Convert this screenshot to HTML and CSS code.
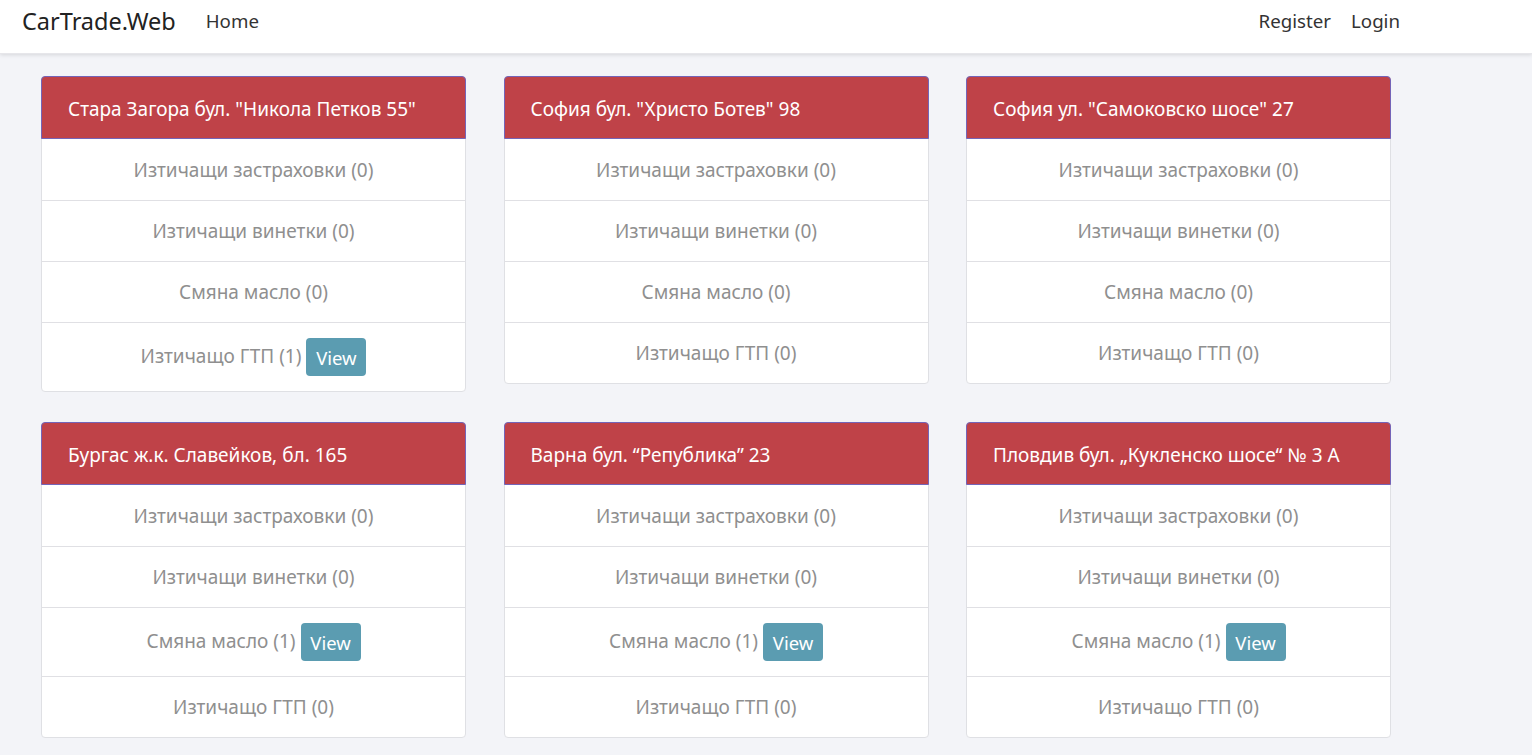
FILE: index.html
```html
<!DOCTYPE html>
<html lang="bg">
<head>
<meta charset="utf-8">
<title>CarTrade.Web</title>
<link rel="stylesheet" href="styles.css">
</head>
<body>
<nav class="navbar">
  <a class="brand" href="#">CarTrade.Web</a>
  <a class="nav-link" href="#">Home</a>
  <div class="nav-right">
    <a class="nav-link" href="#">Register</a>
    <a class="nav-link" href="#">Login</a>
  </div>
</nav>
<main class="grid">
  <section class="card">
    <header class="card-head">Стара Загора бул. "Никола Петков 55"</header>
    <div class="row">Изтичащи застраховки (0)</div>
    <div class="row">Изтичащи винетки (0)</div>
    <div class="row">Смяна масло (0)</div>
    <div class="row row-btn">Изтичащо ГТП (1) <a class="btn" href="#">View</a></div>
  </section>
  <section class="card">
    <header class="card-head">София бул. "Христо Ботев" 98</header>
    <div class="row">Изтичащи застраховки (0)</div>
    <div class="row">Изтичащи винетки (0)</div>
    <div class="row">Смяна масло (0)</div>
    <div class="row">Изтичащо ГТП (0)</div>
  </section>
  <section class="card">
    <header class="card-head">София ул. "Самоковско шосе" 27</header>
    <div class="row">Изтичащи застраховки (0)</div>
    <div class="row">Изтичащи винетки (0)</div>
    <div class="row">Смяна масло (0)</div>
    <div class="row">Изтичащо ГТП (0)</div>
  </section>
  <section class="card">
    <header class="card-head">Бургас ж.к. Славейков, бл. 165</header>
    <div class="row">Изтичащи застраховки (0)</div>
    <div class="row">Изтичащи винетки (0)</div>
    <div class="row row-btn">Смяна масло (1) <a class="btn" href="#">View</a></div>
    <div class="row">Изтичащо ГТП (0)</div>
  </section>
  <section class="card">
    <header class="card-head">Варна бул. “Република” 23</header>
    <div class="row">Изтичащи застраховки (0)</div>
    <div class="row">Изтичащи винетки (0)</div>
    <div class="row row-btn">Смяна масло (1) <a class="btn" href="#">View</a></div>
    <div class="row">Изтичащо ГТП (0)</div>
  </section>
  <section class="card">
    <header class="card-head">Пловдив бул. „Кукленско шосе“ № 3 А</header>
    <div class="row">Изтичащи застраховки (0)</div>
    <div class="row">Изтичащи винетки (0)</div>
    <div class="row row-btn">Смяна масло (1) <a class="btn" href="#">View</a></div>
    <div class="row">Изтичащо ГТП (0)</div>
  </section>
</main>
</body>
</html>
```

FILE: styles.css
```css
* { box-sizing: border-box; }
html, body { margin: 0; padding: 0; }
body {
  background: #f3f4f8;
  font-family: "Noto Sans", "Open Sans", sans-serif;
  color: #212529;
  height: 755px;
  overflow: hidden;
}
a { text-decoration: none; }
.navbar {
  height: 54px;
  background: #fff;
  box-shadow: 0 1px 4px rgba(0,0,0,0.12);
  border-bottom: 1px solid #e6e6ea;
  display: flex;
  align-items: center;
  padding: 0 0 12px 22px;
}
.brand {
  font-size: 23.5px;
  color: #222;
  margin-right: 30px;
}
.nav-link {
  font-size: 18.7px;
  color: #333;
}
.nav-right {
  margin-left: auto;
  margin-right: 132px;
  display: flex;
  gap: 20px;
}
.grid {
  display: grid;
  grid-template-columns: repeat(3, 425px);
  column-gap: 37.5px;
  row-gap: 30px;
  align-items: start;
  padding: 22px 0 0 41px;
}
.card {
  background: #fff;
  border: 1px solid #dfe0e4;
  border-radius: 4px;
}
.card-head {
  background: #bf4248;
  color: #fff;
  height: 63px;
  border: 1px solid #7464b8;
  border-radius: 4px 4px 0 0;
  margin: -1px -1px 0 -1px;
  font-size: 19px;
  display: flex;
  align-items: center;
  padding: 2px 0 0 26px;
}
.row {
  height: 61px;
  border-top: 1px solid #e0e0e4;
  display: flex;
  align-items: center;
  justify-content: center;
  font-size: 19px;
  color: #8f8f8f;
}
.card-head + .row { border-top: none; }
.row-btn { height: 69px; gap: 5px; padding-bottom: 2px; }
.btn {
  background: #5b9cb1;
  color: #fff;
  border-radius: 4px;
  width: 60px;
  height: 38px;
  display: inline-flex;
  align-items: center;
  justify-content: center;
  font-size: 18.5px;
  margin-top: 2px;
}
```
